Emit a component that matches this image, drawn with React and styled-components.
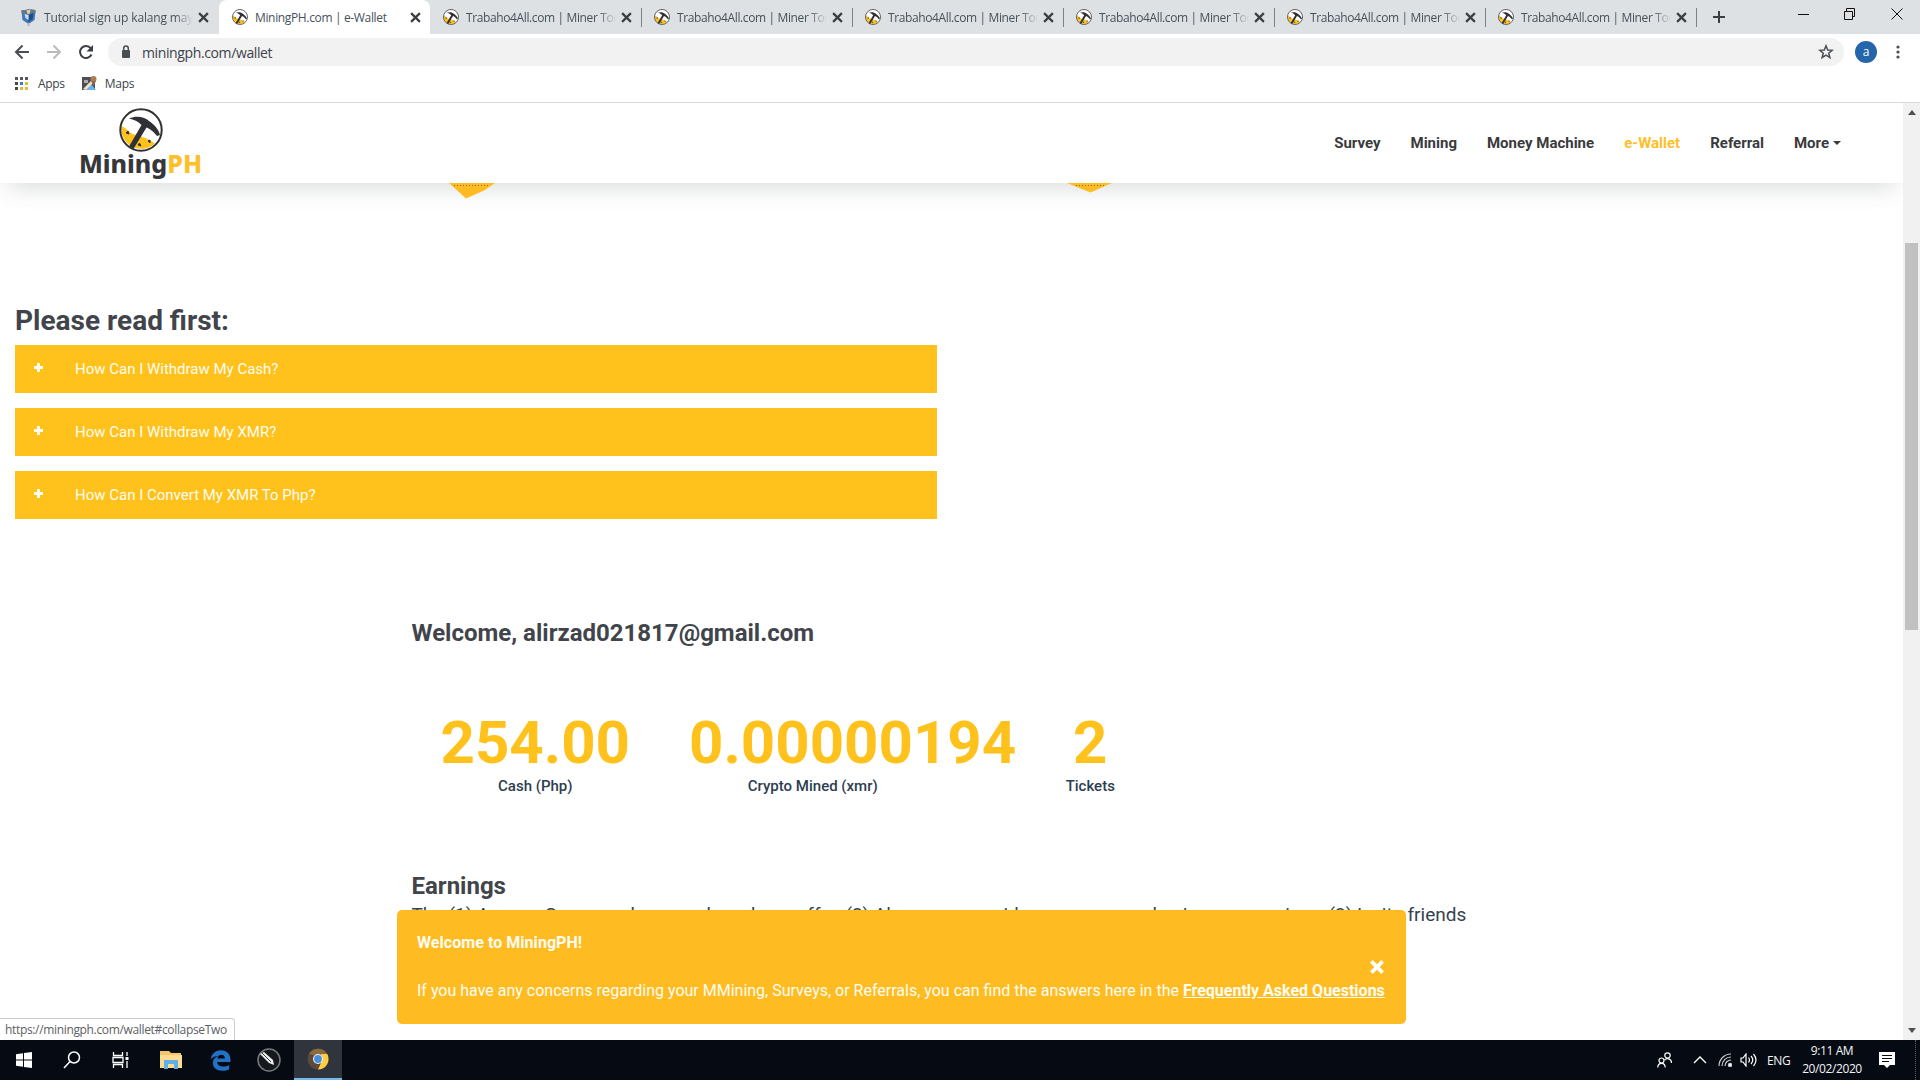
import React, { useState } from 'react'
import styled, { createGlobalStyle } from 'styled-components'

const GlobalStyle = createGlobalStyle`
  * {
    box-sizing: border-box;
  }
  body {
    margin: 0;
    overflow: hidden;
    background: #fff;
    font-family: Roboto, 'Liberation Sans', sans-serif;
  }
`
const Screen = styled.div`
  display: flex;
  flex-direction: column;
  width: 1920px;
  height: 1080px;
  overflow: hidden;
`

/* ---------- browser chrome ---------- */
const Chrome = styled.div`
  height: 103px;
  flex: none;
  font-family: 'Open Sans', 'Noto Sans', sans-serif;
  border-bottom: 1px solid #d9dadb;
`
const TabStrip = styled.div`
  display: flex;
  height: 34px;
  background: #dee1e4;
`
const Tab = styled.div`
  display: flex;
  align-items: center;
  width: ${props => props.first ? '219px' : '211px'};
  height: 34px;
  padding: ${props => props.first ? '0 10px 0 20px' : '0 9px 0 13px'};
  background: ${props => props.active ? '#fff' : 'transparent'};
  border-radius: ${props => props.active ? '8px 8px 0 0' : '0'};
  position: relative;
  svg {
    flex: none;
  }
  &::after {
    content: '';
    position: absolute;
    right: -1px;
    top: 8px;
    width: 1px;
    height: 19px;
    background: ${props => props.divider ? '#7d8084' : 'transparent'};
  }
`
const TabTitle = styled.div`
  flex: 1;
  margin: 0 5px 0 7px;
  overflow: hidden;
  white-space: nowrap;
  font-size: 12px;
  letter-spacing: ${props => props.spacing || '-0.38px'};
  color: #45525c;
  mask-image: ${props => props.fade ? 'linear-gradient(90deg, #000 88%, transparent)' : 'none'};
`
const NewTab = styled.div`
  display: flex;
  align-items: center;
  flex: 1;
  padding-left: 17px;
`
const WindowButtons = styled.div`
  display: flex;
  align-items: center;
  gap: 35px;
  height: 28px;
  padding-right: 17px;
`
const Toolbar = styled.div`
  display: flex;
  align-items: center;
  height: 36px;
  padding: 0 14px;
`
const NavButtons = styled.div`
  display: flex;
  gap: 16px;
  width: 94px;
`
const Omnibox = styled.div`
  display: flex;
  align-items: center;
  width: 1736px;
  height: 28px;
  padding: 0 10px 0 12px;
  border-radius: 14px;
  background: #f2f2f3;
`
const Url = styled.div`
  flex: 1;
  margin-left: 10px;
  font-size: 14px;
  letter-spacing: -0.38px;
  color: #3b434a;
`
const Avatar = styled.div`
  width: 22px;
  height: 22px;
  margin: 0 19px 0 11px;
  border-radius: 50%;
  background: #2465ac;
  color: #fff;
  font-size: 12px;
  line-height: 21px;
  text-align: center;
`
const Bookmarks = styled.div`
  display: flex;
  align-items: center;
  height: 27px;
  padding-left: 15px;
`
const Bookmark = styled.div`
  display: flex;
  align-items: center;
  gap: ${props => props.gap};
  margin-right: 17px;
  font-size: 12px;
  letter-spacing: -0.3px;
  color: #3b434a;
`

/* ---------- page ---------- */
const Viewport = styled.div`
  display: flex;
  flex: 1;
  min-height: 0;
  position: relative;
`
const Page = styled.div`
  width: 1903px;
  overflow: hidden;
`
const SiteNav = styled.div`
  display: flex;
  justify-content: space-between;
  align-items: center;
  height: 80px;
  padding: 0 62px 0 79px;
  background: #fff;
  box-shadow: 0 12px 24px -8px rgba(60, 70, 70, 0.2);
  position: relative;
`
const Brand = styled.div`
  width: 123px;
  margin-top: -2px;
  svg {
    display: block;
    margin: 0 auto;
  }
`
const BrandName = styled.div`
  display: flex;
  justify-content: center;
  font-family: 'Noto Sans', 'Open Sans', sans-serif;
  font-size: 25px;
  font-weight: 800;
  line-height: 26px;
  margin-top: -2px;
  padding-bottom: 1px;
  white-space: nowrap;
  color: #36373b;
  span {
    color: #fdc02a;
  }
`
const Links = styled.div`
  display: flex;
  gap: 30px;
  font-size: 15px;
  font-weight: 700;
`
const NavLink = styled.div`
  display: flex;
  align-items: center;
  gap: 4px;
  color: ${props => props.active ? '#fdc02a' : '#3a3a3c'};
`
const Caret = styled.span`
  border: 4px solid transparent;
  border-top-color: #3a3a3c;
  border-bottom: 0;
`
const Tips = styled.svg`
  display: block;
  position: relative;
`
const Section = styled.div`
  padding: 87px 15px 0;
  width: 952px;
`
const Heading = styled.h2`
  margin: 0;
  font-size: ${props => props.size};
  line-height: ${props => props.line};
  font-weight: 700;
  color: #41454b;
`
const Questions = styled.div`
  padding-top: 3px;
`
const Question = styled.div`
  display: flex;
  align-items: center;
  height: 48px;
  margin-bottom: 15px;
  padding-left: 19px;
  background: #ffc11c;
  color: #fffdf0;
  font-size: 15px;
  svg {
    width: 9px;
    margin: 0 32px 3px 0;
  }
`
const Container = styled.div`
  width: 1110px;
  margin: 0 0 0 396.5px;
  padding: 77px 15px 0;
`
const Counters = styled.div`
  display: flex;
  margin: 54px -15px 74px;
`
const Counter = styled.div`
  width: 277.5px;
  padding: 0 15px;
  text-align: center;
`
const Value = styled.div`
  display: flex;
  justify-content: ${props => props.wide ? 'flex-start' : 'center'};
  font-size: 60px;
  font-weight: 700;
  line-height: 68px;
  color: #ffc11c;
`
const Label = styled.div`
  margin-top: -1px;
  font-size: 15px;
  font-weight: 500;
  line-height: 20px;
  color: #2c3e50;
`
const Lead = styled.p`
  display: flex;
  margin: 0;
  font-size: 19px;
  line-height: 26px;
  white-space: nowrap;
  color: #34424f;
`
const Phrase = styled.span`
  flex: none;
  width: ${props => props.width}px;
`
const Scrollbar = styled.div`
  display: flex;
  flex-direction: column;
  align-items: center;
  width: 17px;
  background: #f1f1f1;
`
const Arrow = styled.span`
  height: 5px;
  margin: ${props => props.up ? '7px 0 128px' : 'auto 0 7px'};
  border: 4px solid transparent;
  border-top: ${props => props.up ? 0 : '5px solid #505050'};
  border-bottom: ${props => props.up ? '5px solid #505050' : 0};
`
const Thumb = styled.div`
  width: 13px;
  height: 387px;
  background: #c1c1c1;
`
const Toast = styled.div`
  position: absolute;
  left: 397px;
  top: 807px;
  width: 1009px;
  height: 114px;
  padding: 21px 20px 0 20px;
  border-radius: 5px;
  background: #ffbb22;
  color: #fffdf0;
  font-size: 16px;
  line-height: 24px;
  white-space: nowrap;
`
const ToastRow = styled.div`
  display: flex;
  justify-content: flex-end;
  height: 24px;
  padding: 5px 2px 0 0;
`
const ToastTitle = styled.div`
  font-weight: 700;
  letter-spacing: 0.05px;
`
const ToastText = styled.div`
  b {
    text-decoration: underline;
  }
`
const StatusBubble = styled.div`
  position: absolute;
  left: -1px;
  bottom: 0;
  width: 236px;
  height: 22px;
  padding-left: 5px;
  border: 1px solid #c9cbcd;
  border-bottom: 0;
  border-radius: 0 4px 0 0;
  background: #fff;
  color: #5b6065;
  font-family: 'Open Sans', 'Noto Sans', sans-serif;
  font-size: 12px;
  line-height: 21px;
  letter-spacing: -0.34px;
  white-space: nowrap;
`

/* ---------- taskbar ---------- */
const Taskbar = styled.div`
  display: flex;
  align-items: center;
  height: 40px;
  flex: none;
  background: #060b13;
  color: #f3f4f5;
  font-family: 'Open Sans', 'Noto Sans', sans-serif;
  font-size: 12px;
`
const TaskItem = styled.div`
  display: flex;
  align-items: center;
  justify-content: center;
  width: ${props => props.width || 49}px;
  height: 40px;
  background: ${props => props.active ? '#30343c' : 'transparent'};
  border-bottom: ${props => props.active ? '2px solid #76b9ed' : '0'};
`
const Tray = styled.div`
  display: flex;
  align-items: center;
  height: 40px;
  margin-left: auto;
`
const TrayIcon = styled.svg`
  margin-left: ${props => props.$left}px;
`
const Lang = styled.div`
  margin: 0 11px 0 9px;
  width: 24px;
  letter-spacing: -0.4px;
`
const Clock = styled.div`
  width: 60px;
  text-align: center;
  line-height: 18px;
  letter-spacing: -0.4px;
  white-space: nowrap;
`
const ShowDesktop = styled.div`
  height: 40px;
  width: 5px;
  margin-left: 20px;
  border-left: 1px dotted #5a5f66;
`

const tabs = [
  { title: 'Tutorial sign up kalang may', fade: true, cube: true, spacing: '-0.15px' },
  { title: 'MiningPH.com | e-Wallet', active: true, spacing: '-0.35px' },
  ...Array.from({ length: 6 }, () => ({ title: 'Trabaho4All.com | Miner Too', fade: true, divider: true })),
]
const links = ['Survey', 'Mining', 'Money Machine', 'e-Wallet', 'Referral', 'More']
const questions = [
  'How Can I Withdraw My Cash?',
  'How Can I Withdraw My XMR?',
  'How Can I Convert My XMR To Php?',
]
const counters = [
  { value: '254.00', label: 'Cash (Php)' },
  { value: '0.00000194', label: 'Crypto Mined (xmr)', wide: true },
  { value: '2', label: 'Tickets' },
]
const phrases = [
  ['The', 37],
  ['(1) Answer Surveys', 182],
  ['because', 76],
  ['have been', 90],
  ['offer. (2) Always', 141],
  ['our', 45],
  ['paid', 46],
  ['once more', 97],
  ['and gain more', 139],
  ['coins', 64],
  ['(3) Invite friends', 140],
]

const MinerLogo = ({ size }) => (
  <svg width={size} height={size} viewBox='0 0 44 44'>
    <circle cx='22' cy='22' r='20.5' fill='#fff' />
    <path d='M2.6 18 C7 20 10 24 13.500 26 L21 28 C26 30 30 31 36 35.500 A20 20 0 0 1 2.600 18Z' fill='#ffc11c' />
    <circle cx='22' cy='22' r='20.700' fill='none' stroke='#303135' strokeWidth='2' />
    <path d='M10 10.500 C18 7 26 9 30 13 C36 17 40 22 41 27 L38 28 C34 23 31 21 27.500 19.500 L14.500 41 L10 38.500 L22.500 17 C19 13 15 11.500 10 10.500Z' fill='#303135' />
    <path d='M7 25l2-2 1 3zM19 37l1.500-2 1.500 3zM29 33l2-1 0 3z' fill='#303135' stroke='#303135' />
  </svg>
)

const CubeIcon = () => (
  <svg width='17' height='18' viewBox='0 0 16 18'>
    <path d='M1 3l7-2 7 2-1 9-6 4-6-4z' fill='#3c78b8' />
    <path d='M1 2l5 0 0 4-5-1zM10 1l5 1 0 3-5 1z' fill='#6c7780' />
    <path d='M6 2l4 0-1 4-2 0z' fill='#e9c9a6' />
    <path d='M8 7l5-2-1 6-4 3z' fill='#1f4e86' />
    <path d='M4 6l4 1v5l-3-2z' fill='#cfe1f2' />
    <path d='M8 15v3' stroke='#b9b2a8' strokeWidth='2' />
  </svg>
)

const CloseIcon = ({ size = 9, color = '#3b3e42', width = 2 }) => (
  <svg width={size} height={size} viewBox='0 0 10 10'>
    <path d='M1 1l8 8M9 1l-8 8' stroke={color} strokeWidth={width} />
  </svg>
)

const Plus = ({ size, color, width }) => (
  <svg width={size} height={size} viewBox='0 0 12 12'>
    <path d='M6 0v12M0 6h12' stroke={color} strokeWidth={width} />
  </svg>
)

const BrowserChrome = () => (
  <Chrome>
    <TabStrip>
      {tabs.map((tab, i) => (
        <Tab key={i} first={i === 0 ? 1 : undefined} active={tab.active ? 1 : undefined} divider={tab.divider ? 1 : undefined}>
          {tab.cube ? <CubeIcon /> : <MinerLogo size={16} />}
          <TabTitle fade={tab.fade ? 1 : undefined} spacing={tab.spacing}>{tab.title}</TabTitle>
          <CloseIcon size={11} />
        </Tab>
      ))}
      <NewTab><Plus size={12} color='#3b3e42' width={2} /></NewTab>
      <WindowButtons>
        <svg width='11' height='11'><path d='M0 5.500h11' stroke='#111' /></svg>
        <svg width='12' height='12' fill='none' stroke='#111'><path d='M.5 3.500h8v8h-8zM2.500 3.500v-3h8v8h-2' /></svg>
        <svg width='12' height='12' stroke='#111'><path d='M.5.5l11 11M11.500.5l-11 11' /></svg>
      </WindowButtons>
    </TabStrip>
    <Toolbar>
      <NavButtons>
        <svg width='16' height='16' fill='none' stroke='#4b4e52' strokeWidth='2'><path d='M15 8H2M8.500 1.500L2 8l6.500 6.500' /></svg>
        <svg width='16' height='16' fill='none' stroke='#b9bbbd' strokeWidth='2'><path d='M1 8h13M7.500 1.500L14 8l-6.500 6.500' /></svg>
        <svg width='16' height='16' fill='none' stroke='#3b3e42' strokeWidth='2'>
          <path d='M13.500 10.500A6 6 0 1 1 12.700 4.200' />
          <path d='M15 1v6.500H8.500z' fill='#3b3e42' stroke='none' />
        </svg>
      </NavButtons>
      <Omnibox>
        <svg width='12' height='14'>
          <rect x='2' y='5' width='8' height='8' rx='1' fill='#4b4e52' />
          <path d='M3.700 6V3.500a2.300 2.500 0 0 1 4.600 0V6' fill='none' stroke='#4b4e52' strokeWidth='1.500' />
        </svg>
        <Url>miningph.com/wallet</Url>
        <svg width='16' height='16' viewBox='0 0 16 16' fill='none' stroke='#4b4e52' strokeWidth='1.500'>
          <path d='M8 1.800l1.700 4.200 4.500.3-3.500 2.900 1.200 4.400L8 11.200l-3.900 2.400 1.200-4.400L1.800 6.300l4.500-.3z' />
        </svg>
      </Omnibox>
      <Avatar>a</Avatar>
      <svg width='4' height='14' fill='#4b4e52'>
        <circle cx='2' cy='2' r='1.600' /><circle cx='2' cy='7' r='1.600' /><circle cx='2' cy='12' r='1.600' />
      </svg>
    </Toolbar>
    <Bookmarks>
      <Bookmark gap='9px'>
        <svg width='14' height='14'>
          {[0, 1, 2].map(row => [0, 1, 2].map(col => (
            <rect
              key={`${row}${col}`} x={col * 5} y={row * 5} width='3' height='3'
              fill={row === 0 ? '#55585c' : col === 0 ? '#3f4b45' : row === 1 && col === 1 ? '#3c78d8' : '#e8b93a'}
            />
          )))}
        </svg>
        Apps
      </Bookmark>
      <Bookmark gap='8px'>
        <svg width='15' height='15'>
          <rect y='1' width='13' height='13' fill='#4d4f55' />
          <path d='M4 14l5-6 5 6z' fill='#6cb3ee' />
          <path d='M1 13L11 3l2 2-9 9z' fill='#efe3c4' />
          <path d='M2 4h4v3H2z' fill='#a8adb2' />
          <circle cx='11.500' cy='3' r='3' fill='#b07a55' />
          <path d='M9 5l2.500 5L14 5z' fill='#8a6a55' />
        </svg>
        Maps
      </Bookmark>
    </Bookmarks>
  </Chrome>
)

const WindowsTaskbar = () => (
  <Taskbar>
    <TaskItem width={48}>
      <svg width='16' height='16' fill='#fff'><path d='M0 2.200l7-1v6.300H0zM8 1l8-1v7.500H8zM0 8.500h7v6.300l-7-1zM8 8.500h8V16l-8-1z' /></svg>
    </TaskItem>
    <TaskItem width={48}>
      <svg width='18' height='18' fill='none' stroke='#fff' strokeWidth='1.500'><circle cx='11' cy='6.500' r='5.500' /><path d='M7 10.500L1 17' /></svg>
    </TaskItem>
    <TaskItem width={48}>
      <svg width='17' height='16' fill='none' stroke='#fff' strokeWidth='1.300'>
        <path d='M1.500 0v3.500h9V0M1 5.500h10v5H1zM1.500 16v-3.500h9V16M15 0v4M15 9v7' /><path d='M13.500 5h3v3h-3z' fill='#fff' stroke='none' />
      </svg>
    </TaskItem>
    <TaskItem width={53}>
      <svg width='22' height='20'>
        <path d='M0 1h9l2 2h10v15H0z' fill='#f3c66b' /><path d='M0 5h22v13H0z' fill='#fbdc92' />
        <path d='M4 19v-9h14v9h-4v-5H8v5z' fill='#62aee6' />
      </svg>
    </TaskItem>
    <TaskItem width={47}>
      <svg width='21' height='21' viewBox='0 0 21 21'>
        <path d='M.5 9.500C1.500 3.500 6 .2 11 .2c6 0 9.700 4.300 9.500 9.500V12H7.200c.3 3.300 3 4.600 6 4.600 2.300 0 4.300-.6 6-1.600v4.200c-2 1.100-4.400 1.600-7 1.600-5.700 0-9.400-3.200-9.400-8C2.800 9.700 5 7.200 8 6 5 6 2.300 7.200.5 9.500zM7.400 8.500h7.500c0-2.400-1.300-3.800-3.600-3.800-2.200 0-3.600 1.500-3.900 3.800z' fill='#2271c4' />
      </svg>
    </TaskItem>
    <TaskItem width={50}>
      <svg width='24' height='24'>
        <circle cx='12' cy='12' r='11' fill='#15181d' stroke='#77797d' strokeWidth='1.500' />
        <path d='M3 6l4-2 9 8 1 5-5-2z' fill='#eceded' /><path d='M5 5l9 9' stroke='#33363b' />
      </svg>
    </TaskItem>
    <TaskItem width={48} active={1}>
      <svg width='22' height='22'>
        <circle cx='11' cy='11' r='10.500' fill='#5b4a3c' />
        <path d='M2 6A10.500 10.500 0 0 1 20.200 6L11 8z' fill='#8d6a3d' />
        <path d='M20.300 6A10.500 10.500 0 0 1 11 21.500L15 12.500 14 6z' fill='#ffcd42' />
        <circle cx='11' cy='11' r='5' fill='#e8eef5' /><circle cx='11' cy='11' r='3.900' fill='#4a90d9' />
      </svg>
    </TaskItem>
    <Tray>
      <TrayIcon $left={0} width='16' height='16' fill='none' stroke='#fff' strokeWidth='1.200'>
        <circle cx='10.500' cy='3.500' r='2.700' /><circle cx='4.500' cy='8.500' r='2.500' />
        <path d='M.8 15.500c0-5.500 7.400-5.500 7.400 0M7.500 8c2.500-2.500 7-1.500 7 3' />
      </TrayIcon>
      <TrayIcon $left={20} width='14' height='8' fill='none' stroke='#fff' strokeWidth='1.300'><path d='M1 7l6-6 6 6' /></TrayIcon>
      <TrayIcon $left={11} width='14' height='14' fill='none' stroke='#c9cbce' strokeWidth='1.200'>
        <path d='M1 13A12 12 0 0 1 13 1M4 13a9 9 0 0 1 9-9M7 13a6 6 0 0 1 6-6' /><circle cx='12' cy='12' r='1.600' fill='#fff' />
      </TrayIcon>
      <TrayIcon $left={8} width='18' height='14' fill='none' stroke='#fff' strokeWidth='1.200'>
        <path d='M1 5h2l3-4v12L3 9H1zM8.500 4.500q2 2.500 0 5M11 3q3.500 4 0 8M13.500 1q5 6 0 12' />
      </TrayIcon>
      <Lang>ENG</Lang>
      <Clock>9:11 AM<br />20/02/2020</Clock>
      <TrayIcon $left={17} width='16' height='16'>
        <path d='M0 0h16v13h-5l-3 3-3-3H0z' fill='#fff' /><path d='M3 3.500h10M3 6.500h10M3 9.500h7' stroke='#060b13' />
      </TrayIcon>
      <ShowDesktop />
    </Tray>
  </Taskbar>
)

export default function App() {
  const [showToast, setShowToast] = useState(true)

  return (
    <Screen>
      <GlobalStyle />
      <BrowserChrome />
      <Viewport>
        <Page>
          <SiteNav>
            <Brand>
              <MinerLogo size={44} />
              <BrandName>Mining<span>PH</span></BrandName>
            </Brand>
            <Links>
              {links.map(link => (
                <NavLink key={link} active={link === 'e-Wallet' ? 1 : undefined}>
                  {link}
                  {link === 'More' && <Caret />}
                </NavLink>
              ))}
            </Links>
          </SiteNav>
          <Tips width='1200' height='30'>
            <path d='M449 0h46l-10 7-19 8.500zM1067 0h45l-21.500 9.500z' fill='#ffbb22' />
            <path d='M454 2.500h36M1076 2.500h28' stroke='#8a6a20' strokeDasharray='1 2' />
          </Tips>
          <Section>
            <Heading size='28px' line='42px'>Please read first:</Heading>
            <Questions>
              {questions.map(question => (
                <Question key={question}>
                  <Plus size={9} color='#fffdf0' width={4} />
                  {question}
                </Question>
              ))}
            </Questions>
          </Section>
          <Container>
            <Heading size='24px' line='44px'>Welcome, alirzad021817@gmail.com</Heading>
            <Counters>
              {counters.map(counter => (
                <Counter key={counter.label}>
                  <Value wide={counter.wide ? 1 : undefined}>{counter.value}</Value>
                  <Label>{counter.label}</Label>
                </Counter>
              ))}
            </Counters>
            <Heading size='24px' line='32px'>Earnings</Heading>
            <Lead>
              {phrases.map(([text, width]) => (
                <Phrase key={text} width={width}>{text}</Phrase>
              ))}
            </Lead>
          </Container>
        </Page>
        <Scrollbar>
          <Arrow up={1} />
          <Thumb />
          <Arrow />
        </Scrollbar>
        {showToast &&
          <Toast>
            <ToastTitle>Welcome to MiningPH!</ToastTitle>
            <ToastRow onClick={() => setShowToast(false)}>
              <CloseIcon size={14} color='#fff' width={2.6} />
            </ToastRow>
            <ToastText>
              If you have any concerns regarding your MMining, Surveys, or Referrals, you can find the answers here in the <b>Frequently Asked Questions</b>
            </ToastText>
          </Toast>
        }
        <StatusBubble>https://miningph.com/wallet#collapseTwo</StatusBubble>
      </Viewport>
      <WindowsTaskbar />
    </Screen>
  )
}
